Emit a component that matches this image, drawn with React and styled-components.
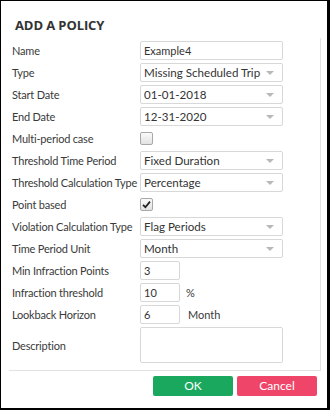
import React from 'react';
import styled, { createGlobalStyle } from 'styled-components';

const GlobalStyle = createGlobalStyle`
  html, body {
    margin: 0;
    padding: 0;
    background: #000;
  }
  body {
    width: 330px;
    height: 410px;
    overflow: hidden;
    font-family: Lato, 'Open Sans', sans-serif;
  }
`;

const Dialog = styled.div`
  margin: 1px 0 0 1px;
  width: 326px;
  height: 407px;
  background: #fff;
  box-sizing: border-box;
  padding: 0 6px 0 8px;
  display: flex;
  flex-direction: column;
`;

const Title = styled.div`
  font-family: 'Open Sans', sans-serif;
  font-size: 13px;
  font-weight: 700;
  color: #333;
  padding: 15px 0 0 6px;
  height: 37px;
  box-sizing: border-box;
  letter-spacing: -0.1px;
`;

const Panel = styled.div`
  border-right: 1px solid #e2e2e2;
  border-bottom: 1px solid #e2e2e2;
  padding: 3px 0 7px 3px;
  display: grid;
  grid-template-columns: 128px 1fr;
  row-gap: 3px;
  align-items: center;
`;

const Label = styled.div`
  font-size: 11px;
  color: #3a3a3a;
  line-height: 19px;
  white-space: nowrap;
  letter-spacing: -0.2px;
`;

const Cell = styled.div`
  display: flex;
  align-items: center;
  min-height: 19px;
  gap: 6px;
`;

const Input = styled.div`
  box-sizing: border-box;
  width: ${(p) => p.$w || 143}px;
  height: ${(p) => p.$h || 19}px;
  border: 1px solid #d8d8d8;
  border-radius: 2px;
  font-size: 11px;
  color: #333;
  line-height: 17px;
  padding: 0 3px;
  white-space: nowrap;
`;

const Select = styled(Input)`
  display: flex;
  justify-content: space-between;
  align-items: center;
  font-size: 11.6px;
  padding: 0 8px 0 3px;
`;

const Arrow = styled.span`
  width: 0;
  height: 0;
  border-left: 4px solid transparent;
  border-right: 4px solid transparent;
  border-top: 4px solid #b8b8b8;
`;

const Box = styled.span`
  box-sizing: border-box;
  width: 13px;
  height: 13px;
  border: 1px solid #a8a8a8;
  border-radius: 2px;
  background: linear-gradient(#fafafa, #e2e2e2);
  display: flex;
  align-items: center;
  justify-content: center;
`;

const Unit = styled.span`
  font-size: 11px;
  color: #3a3a3a;
  margin-left: ${(p) => p.$ml || 0}px;
`;

const Footer = styled.div`
  display: flex;
  justify-content: flex-end;
  gap: 4px;
  padding: 5px 4px 0 0;
`;

const Button = styled.div`
  width: 80px;
  height: 20px;
  border-radius: 2px;
  background: ${(p) => p.$bg};
  color: #fff;
  font-size: 12px;
  line-height: 20px;
  text-align: center;
`;

const SelectBox = ({ children }) => (
  <Select>
    <span>{children}</span>
    <Arrow />
  </Select>
);

const Check = ({ checked }) => (
  <Box>
    {checked && (
      <svg width="9" height="9" viewBox="0 0 9 9">
        <path d="M1 4.8 L3.4 7.2 L8 1.6" fill="none" stroke="#222" strokeWidth="1.8" />
      </svg>
    )}
  </Box>
);

export default function App() {
  return (
    <>
      <GlobalStyle />
      <Dialog>
        <Title>ADD A POLICY</Title>
        <Panel>
          <Label>Name</Label>
          <Cell><Input>Example4</Input></Cell>
          <Label>Type</Label>
          <Cell><SelectBox>Missing Scheduled Trip</SelectBox></Cell>
          <Label>Start Date</Label>
          <Cell><SelectBox>01-01-2018</SelectBox></Cell>
          <Label>End Date</Label>
          <Cell><SelectBox>12-31-2020</SelectBox></Cell>
          <Label>Multi-period case</Label>
          <Cell><Check /></Cell>
          <Label>Threshold Time Period</Label>
          <Cell><SelectBox>Fixed Duration</SelectBox></Cell>
          <Label>Threshold Calculation Type</Label>
          <Cell><SelectBox>Percentage</SelectBox></Cell>
          <Label>Point based</Label>
          <Cell><Check checked /></Cell>
          <Label>Violation Calculation Type</Label>
          <Cell><SelectBox>Flag Periods</SelectBox></Cell>
          <Label>Time Period Unit</Label>
          <Cell><SelectBox>Month</SelectBox></Cell>
          <Label>Min Infraction Points</Label>
          <Cell><Input $w={40}>3</Input></Cell>
          <Label>Infraction threshold</Label>
          <Cell><Input $w={40}>10</Input><Unit>%</Unit></Cell>
          <Label>Lookback Horizon</Label>
          <Cell><Input $w={40}>6</Input><Unit $ml={2}>Month</Unit></Cell>
          <Label>Description</Label>
          <Cell><Input $h={36} /></Cell>
        </Panel>
        <Footer>
          <Button $bg="#1aa85f">OK</Button>
          <Button $bg="#ef4569">Cancel</Button>
        </Footer>
      </Dialog>
    </>
  );
}
